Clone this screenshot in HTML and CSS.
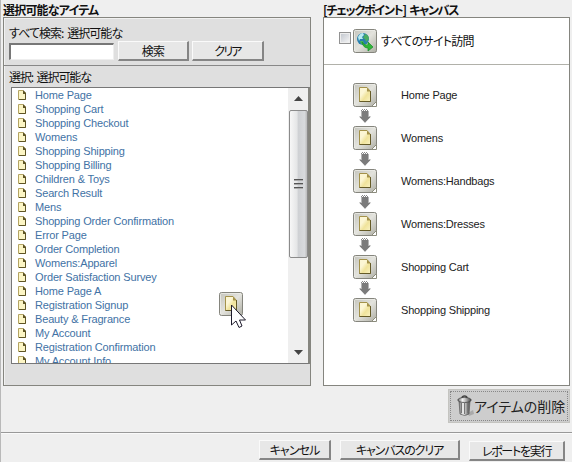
FILE: index.html
```html
<!DOCTYPE html>
<html lang="ja">
<head>
<meta charset="utf-8">
<title>キャンバス</title>
<link rel="stylesheet" href="styles.css">
</head>
<body>
<svg class="defs" width="0" height="0" aria-hidden="true">
  <defs>
    <linearGradient id="tile" x1="0" y1="0" x2="1" y2="1"><stop offset="0" stop-color="#c3c3bb"/><stop offset=".5" stop-color="#e3e3dd"/><stop offset="1" stop-color="#adada3"/></linearGradient>
    <linearGradient id="paper" x1="0" y1="0" x2="1" y2="1"><stop offset=".35" stop-color="#fcf6d4"/><stop offset=".6" stop-color="#f0e39b"/><stop offset="1" stop-color="#faf3c4"/></linearGradient>
    <linearGradient id="can" x1="0" y1="0" x2="1" y2="0"><stop offset="0" stop-color="#666"/><stop offset=".35" stop-color="#f2f2f2"/><stop offset=".65" stop-color="#aaa"/><stop offset="1" stop-color="#444"/></linearGradient>
    <symbol id="tilebox" viewBox="0 0 24 24">
      <rect x=".5" y=".5" width="23" height="23" rx="2" fill="url(#tile)" stroke="#85857d"/>
      <path d="M1.5 22V2.5Q1.5 1.5 2.5 1.5H22" fill="none" stroke="#ecece7" stroke-width=".8"/>
    </symbol>
    <symbol id="page" viewBox="0 0 24 24">
      <use href="#tilebox"/>
      <path d="M6.500 4.500H14L17.500 8.500V18.500H6.500Z" fill="url(#paper)" stroke="#a4924a"/>
      <path d="M17.500 8V18.500H6.500" fill="none" stroke="#655b28"/>
      <path d="M14 4.500V8.500H17.500Z" fill="#a4924a"/>
    </symbol>
    <symbol id="node" viewBox="0 0 24 24">
      <use href="#page"/>
      <path d="M23.500 18.500V23.500H18.500Z" fill="#fff" stroke="#8b8b7c"/>
    </symbol>
    <symbol id="leaf" viewBox="0 0 8 11">
      <path d="M.5 .5H5L7.500 3V9.500H.5Z" fill="#fcf5c5" stroke="#b5a563"/>
      <path d="M7.500 3V9.500H1" fill="none" stroke="#5e5424"/>
      <path d="M5 0L8 3V4H5Z" fill="#5e5424"/>
    </symbol>
    <symbol id="down" viewBox="0 0 12 14">
      <path d="M2 2H10V7H12L6 14L0 7H2Z" fill="#b5b5b5"/>
      <path d="M3 2H9V8H11.500L6 13.500L.5 8H3Z" fill="#7b7b7b"/>
      <path d="M3 .5H9M2 1.500H10" stroke="#888" stroke-dasharray="1 1"/>
    </symbol>
  </defs>
</svg>
<main class="app">
  <div class="columns">
    <section class="source">
      <h2 class="title title-source">選択可能なアイテム</h2>
      <div class="panel source-panel">
        <div class="search">
          <label class="label search-label">すべて検索: 選択可能な</label>
          <div class="search-row">
            <input class="field" type="text">
            <button class="btn btn-search"><span>検索</span></button>
            <button class="btn btn-reset"><span class="t-reset">クリア</span></button>
          </div>
        </div>
        <div class="pick">
          <div class="label pick-label">選択: 選択可能な</div>
          <div class="listbox">
            <ul class="items">
              <li><svg><use href="#leaf"/></svg>Home Page</li>
              <li><svg><use href="#leaf"/></svg>Shopping Cart</li>
              <li><svg><use href="#leaf"/></svg>Shopping Checkout</li>
              <li><svg><use href="#leaf"/></svg>Womens</li>
              <li><svg><use href="#leaf"/></svg>Shopping Shipping</li>
              <li><svg><use href="#leaf"/></svg>Shopping Billing</li>
              <li><svg><use href="#leaf"/></svg>Children &amp; Toys</li>
              <li><svg><use href="#leaf"/></svg>Search Result</li>
              <li><svg><use href="#leaf"/></svg>Mens</li>
              <li><svg><use href="#leaf"/></svg>Shopping Order Confirmation</li>
              <li><svg><use href="#leaf"/></svg>Error Page</li>
              <li><svg><use href="#leaf"/></svg>Order Completion</li>
              <li><svg><use href="#leaf"/></svg>Womens:Apparel</li>
              <li><svg><use href="#leaf"/></svg>Order Satisfaction Survey</li>
              <li><svg><use href="#leaf"/></svg>Home Page A</li>
              <li><svg><use href="#leaf"/></svg>Registration Signup</li>
              <li><svg><use href="#leaf"/></svg>Beauty &amp; Fragrance</li>
              <li><svg><use href="#leaf"/></svg>My Account</li>
              <li><svg><use href="#leaf"/></svg>Registration Confirmation</li>
              <li><svg><use href="#leaf"/></svg>My Account Info</li>
            </ul>
            <div class="scroll">
              <svg class="tri" viewBox="0 0 9 5"><path d="M0 5L4.500 0L9 5Z" fill="#444"/></svg>
              <div class="thumb"><i></i><i></i><i></i></div>
              <svg class="tri tri-down" viewBox="0 0 9 5"><path d="M0 0H9L4.500 5Z" fill="#444"/></svg>
            </div>
          </div>
        </div>
      </div>
    </section>
    <section class="canvas">
      <h2 class="title title-canvas">[チェックポイント] キャンバス</h2>
      <div class="panel canvas-panel">
        <div class="visits">
          <span class="check"></span>
          <svg class="globe" viewBox="0 0 24 24">
            <use href="#tilebox"/>
            <circle cx="10" cy="10" r="6" fill="#287fae"/>
            <path d="M5 8Q7 4 10 4L11 6L9 8L10 10L7 10L6 12Z" fill="#b9ebf1"/>
            <path d="M12 5Q16 6 16 10L13 13L12 10L10 9Z" fill="#4aad62"/>
            <path d="M7 12L10 12L11 15L8 15Z" fill="#48b75a"/>
            <path d="M9 13Q12 17 15 16V13L20 18L15 22V19Q10 19 9 13Z" fill="#30b637" stroke="#168c2b" stroke-width=".7"/>
          </svg>
          <span class="visits-text">すべてのサイト訪問</span>
        </div>
        <div class="flow">
          <div class="step"><svg class="node"><use href="#node"/></svg><span>Home Page</span></div>
          <svg class="down"><use href="#down"/></svg>
          <div class="step"><svg class="node"><use href="#node"/></svg><span>Womens</span></div>
          <svg class="down"><use href="#down"/></svg>
          <div class="step"><svg class="node"><use href="#node"/></svg><span>Womens:Handbags</span></div>
          <svg class="down"><use href="#down"/></svg>
          <div class="step"><svg class="node"><use href="#node"/></svg><span>Womens:Dresses</span></div>
          <svg class="down"><use href="#down"/></svg>
          <div class="step"><svg class="node"><use href="#node"/></svg><span>Shopping Cart</span></div>
          <svg class="down"><use href="#down"/></svg>
          <div class="step"><svg class="node"><use href="#node"/></svg><span>Shopping Shipping</span></div>
        </div>
      </div>
    </section>
  </div>
  <div class="trash-row">
    <div class="trash">
      <svg class="bin" viewBox="0 0 18 22">
        <path d="M12 18L17 15L18 19L13 21Z" fill="#aaa"/>
        <path d="M3 6H14L13 19Q8.500 22 4 19Z" fill="url(#can)" stroke="#666" stroke-width=".8"/>
        <path d="M5.500 8V18M8.500 8V19M11.500 8V18" stroke="#777"/>
        <ellipse cx="8.500" cy="5" rx="6.700" ry="2.500" fill="url(#can)" stroke="#444" stroke-width=".8"/>
        <path d="M6 3Q6 1 8.500 1Q11 1 11 3" fill="none" stroke="#444" stroke-width="1.300"/>
      </svg>
      <span>アイテムの削除</span>
    </div>
  </div>
  <footer class="actions">
    <button class="btn btn-cancel"><span class="t-cancel">キャンセル</span></button>
    <button class="btn btn-clear"><span class="t-clear">キャンバスのクリア</span></button>
    <button class="btn btn-run"><span class="t-run">レポートを実行</span></button>
  </footer>
  <svg class="dragged" viewBox="0 0 30 38">
    <use href="#page" width="24" height="24"/>
    <path d="M12.500 13V33L17 29L20 35.500L23 34L20.500 28H26.500Z" fill="#fff" stroke="#1d1a2b"/>
  </svg>
</main>
</body>
</html>
```

FILE: styles.css
```css
* { box-sizing: border-box; }
body {
  margin: 0;
  background: #efefef;
  color: #111;
  font-family: "Liberation Sans", "Noto Sans CJK JP", sans-serif;
  font-size: 11px;
}
svg { display: block; flex: none; }
.defs { position: absolute; }
.app {
  position: relative;
  width: 572px;
  height: 462px;
  overflow: hidden;
  border-left: 1px solid #b9b9b9;
}
.columns { display: flex; gap: 12px; padding-left: 2px; height: 386px; }
.source { width: 308px; }
.canvas { width: 247px; }
.title, .label, .btn, .visits-text, .trash {
  font-family: "Noto Sans CJK JP", sans-serif;
  font-feature-settings: "palt";
  white-space: nowrap;
}
.title { margin: 0; height: 17px; font-size: 12px; line-height: 19px; font-weight: 700; }
.title-source { letter-spacing: -.8px; }
.title-canvas { letter-spacing: -1.25px; word-spacing: 2px; }
.panel { height: 369px; border: 1px solid #85857f; }
.source-panel { background: #dfdfdf; box-shadow: inset 1px 1px #f1f1f1; }
.search { height: 48px; padding: 7px 5px 0; border-bottom: 1px solid #888; }
.label { font-size: 12px; line-height: 16px; }
.search-label { display: block; height: 18px; letter-spacing: -.95px; word-spacing: 2px; }
.search-row { display: flex; }
.field {
  width: 105px;
  height: 17px;
  margin: 0;
  padding: 0;
  background: #fff;
  border: 1px solid #eee;
  border-top: 2px solid #777;
  border-left: 2px solid #777;
}
.btn {
  display: flex;
  align-items: center;
  justify-content: center;
  height: 20px;
  margin: 0;
  padding: 0;
  background: #e7e7e7;
  border: 1px solid #fafafa;
  border-right: 2px solid #858585;
  border-bottom: 2px solid #858585;
  color: #111;
  font-size: 12px;
  line-height: 16px;
}
.btn-search { width: 71px; margin: -2px 0 0 4px; letter-spacing: -.8px; }
.btn-reset { width: 72px; margin: -2px 0 0 3px; }
.t-reset { letter-spacing: -1.8px; }
.t-cancel { letter-spacing: -.9px; }
.t-clear { letter-spacing: -1.1px; }
.t-run { letter-spacing: -1.3px; }
.pick { padding-left: 7px; }
.pick-label { height: 21px; margin-left: -2px; padding-top: 3px; letter-spacing: -1.1px; word-spacing: 2px; }
.listbox {
  display: flex;
  height: 277px;
  background: #fff;
  border: 1px solid #777;
  border-right: 2px solid #85857f;
  overflow: hidden;
}
.items {
  flex: 1;
  margin: 0;
  padding: 0 0 0 6px;
  list-style: none;
  color: #4272a5;
  letter-spacing: -.15px;
}
.items li { display: flex; height: 14px; line-height: 14px; white-space: nowrap; }
.items svg { width: 8px; height: 11px; margin: 2px 9px 0 0; }
.scroll {
  display: flex;
  flex-direction: column;
  align-items: center;
  width: 20px;
  background: #efefef;
}
.tri { width: 9px; height: 5px; margin-top: 8px; }
.tri-down { margin-top: 92px; }
.thumb {
  display: flex;
  flex-direction: column;
  align-items: center;
  justify-content: center;
  gap: 2px;
  width: 19px;
  height: 148px;
  margin-top: 9px;
  border: 1px solid #8b8b8b;
  border-radius: 2px;
  background: linear-gradient(90deg, #f7f7f7, #e5e6e7 40%, #cfd1d4 50%, #d8dadd 85%, #bbb);
}
.thumb i { width: 9px; height: 2px; background: #555; border-bottom: 1px solid #aaa; }
.canvas-panel { background: #fff; }
.visits { display: flex; height: 47px; padding: 11px 0 0 15px; border-bottom: 1px solid #b1b1aa; }
.check {
  width: 12px;
  height: 12px;
  margin: 3px 2px 0 0;
  border: 1px solid #929292;
  background: linear-gradient(135deg, #bfc4cc, #f7f7f7);
  box-shadow: inset 0 0 0 1px #eee;
}
.globe, .node { width: 24px; height: 24px; }
.visits-text { margin: 3px 0 0 4px; font-size: 12px; line-height: 18px; letter-spacing: -.75px; }
.flow { padding: 18px 0 0 29px; }
.step { display: flex; gap: 24px; line-height: 24px; letter-spacing: -.2px; color: #222; }
.down { width: 12px; height: 14px; margin: 2px 0 3px 6px; }
.trash-row { display: flex; justify-content: flex-end; height: 46px; padding: 3px 2px 0 0; }
.trash {
  display: flex;
  align-items: center;
  width: 122px;
  height: 34px;
  padding-left: 7px;
  background: #cdcdcd;
  border: 1px solid #c4c4c0;
  outline: 1px dotted #888;
  outline-offset: -3px;
  color: #222;
  font-size: 14px;
}
.bin { width: 18px; height: 22px; margin-right: 0; }
.actions { display: flex; height: 30px; padding: 7px 0 0 258px; border-top: 1px solid #999; box-shadow: inset 0 1px #fafafa; }
.btn-cancel { width: 72px; }
.btn-clear { width: 120px; margin-left: 9px; }
.btn-run { width: 96px; margin: 1px 0 0 9px; }
.dragged { position: absolute; left: 218px; top: 292px; width: 30px; height: 38px; }
```
